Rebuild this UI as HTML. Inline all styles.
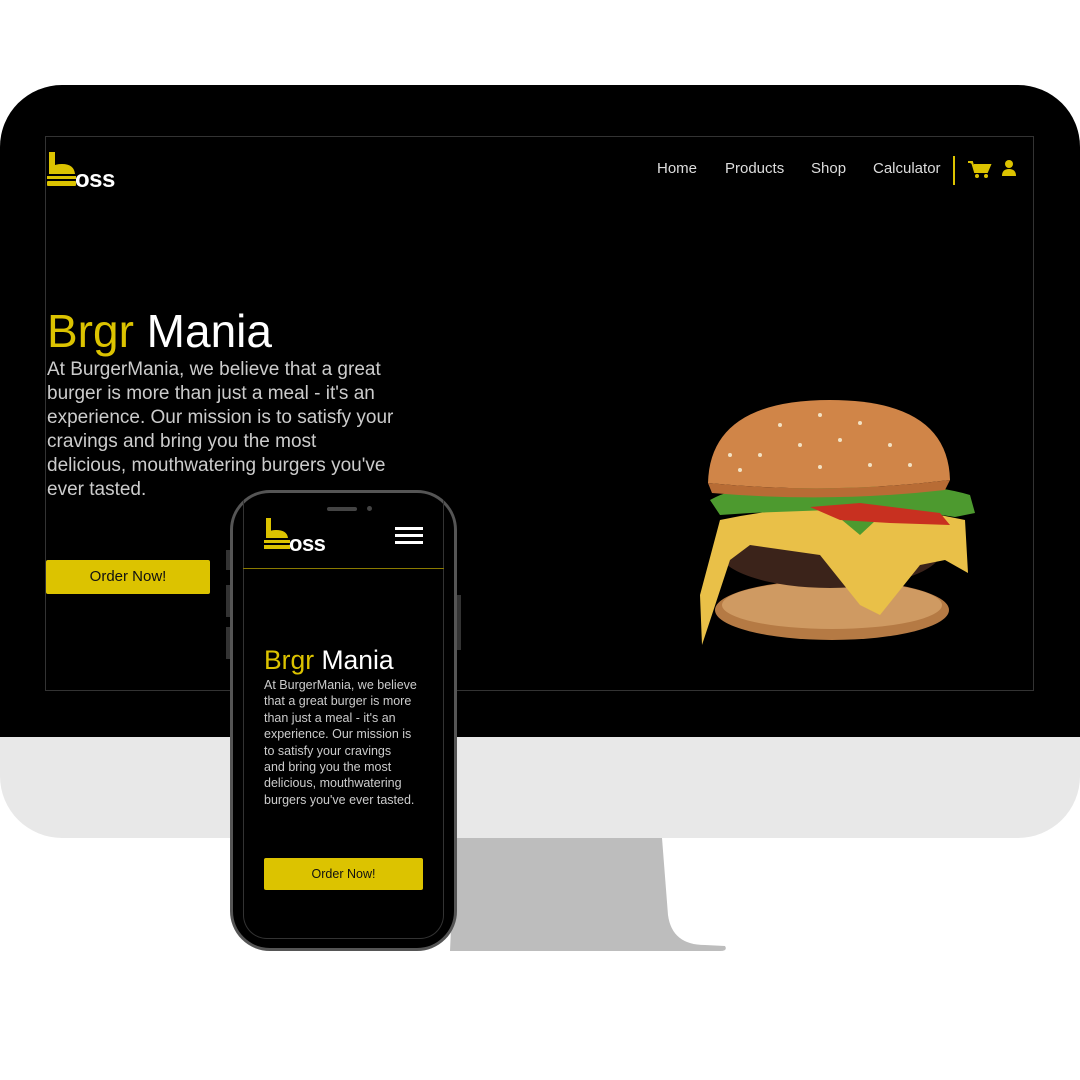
<!DOCTYPE html>
<html><head><meta charset="utf-8"><style>
*{margin:0;padding:0;box-sizing:border-box}
body{width:1080px;height:1080px;background:#fff;position:relative;overflow:hidden;font-family:"Liberation Sans",sans-serif}
.abs{position:absolute}
.y{color:#dcc300}
</style></head><body>
<svg class="abs" style="left:0;top:0" width="1080" height="1080">
<path d="M455 838 L662 838 L668 915 Q672 945 705 945 L725 946 Q728 951 720 951 L450 951 Z" fill="#bdbdbd"/>
</svg>
<div class="abs" style="left:0;top:85px;width:1080px;height:753px;border-radius:62px;background:#e8e8e8;overflow:hidden">
<div style="height:652px;background:#000"></div>
</div>
<div class="abs" style="left:45px;top:136px;width:989px;height:555px;border:1px solid #333"></div>
<svg class="abs" style="left:46px;top:150px" width="90" height="40">
<rect x="3" y="2" width="6" height="22" fill="#dcc300"/>
<path d="M3 24 Q3 14 16 14 Q28 14 29 24 Z" fill="#dcc300"/>
<rect x="1" y="26" width="29" height="3" fill="#dcc300"/>
<rect x="1" y="31" width="29" height="5" rx="1" fill="#dcc300"/>
<text x="29" y="37" font-family="Liberation Sans" font-weight="bold" font-size="24" fill="#fff" letter-spacing="-0.5">oss</text>
</svg>
<div class="abs" style="left:657px;top:160px;color:#ddd;font-size:15px">
<span class="abs" style="left:0">Home</span><span class="abs" style="left:68px">Products</span><span class="abs" style="left:154px">Shop</span><span class="abs" style="left:216px;white-space:nowrap">Calculator</span></div>
<div class="abs" style="left:953px;top:156px;width:2px;height:29px;background:#dcc300"></div>
<svg class="abs" style="left:966px;top:158px" width="60" height="24">
<path d="M2 4 L6 4 L9 14 L21 14 L24 7 L8 7" fill="#dcc300" stroke="#dcc300" stroke-width="2"/>
<circle cx="11" cy="18" r="2" fill="#dcc300"/><circle cx="20" cy="18" r="2" fill="#dcc300"/>
<circle cx="43" cy="6" r="4" fill="#dcc300"/><path d="M36 18 Q36 11 43 11 Q50 11 50 18 Z" fill="#dcc300"/>
</svg>
<div class="abs" style="left:47px;top:305px;font-size:46px;color:#fff;line-height:52px;white-space:nowrap"><span class="y">Brgr</span> Mania</div>
<div class="abs" style="left:47px;top:358px;font-size:19px;letter-spacing:0;line-height:24px;color:#ccc;white-space:nowrap">At BurgerMania, we believe that a great<br>burger is more than just a meal - it's an<br>experience. Our mission is to satisfy your<br>cravings and bring you the most<br>delicious, mouthwatering burgers you've<br>ever tasted.</div>
<div class="abs" style="left:46px;top:560px;width:164px;height:34px;background:#dcc300;border-radius:2px;font-size:15px;text-align:center;line-height:34px;color:#111">Order Now!</div>
<svg class="abs" style="left:690px;top:395px" width="290" height="250">
<ellipse cx="142" cy="215" rx="117" ry="30" fill="#b57a44"/>
<ellipse cx="142" cy="210" rx="110" ry="24" fill="#cf9a62"/>
<ellipse cx="140" cy="155" rx="112" ry="38" fill="#3b231a"/>
<path d="M30 125 Q150 100 250 120 L275 125 L278 178 L255 165 L230 170 L190 220 L170 210 L130 160 L60 150 L40 165 L12 250 L10 200 Z" fill="#e9c048"/>
<path d="M20 105 Q50 88 90 95 Q140 85 190 92 Q240 88 280 100 L285 118 L265 122 L200 112 L170 140 L140 115 L60 118 L30 120 Z" fill="#4d9a2f"/>
<path d="M120 112 L170 108 L250 118 L260 130 L200 128 L150 125 Z" fill="#c83020"/>
<path d="M18 88 Q20 5 140 5 Q258 5 260 85 Q140 100 18 88 Z" fill="#d08548"/>
<path d="M18 88 Q140 100 260 85 L255 95 Q140 108 22 98 Z" fill="#b86c35"/>
<g fill="#f2e2c4"><circle cx="90" cy="30" r="2"/><circle cx="130" cy="20" r="2"/><circle cx="170" cy="28" r="2"/><circle cx="110" cy="50" r="2"/><circle cx="150" cy="45" r="2"/><circle cx="200" cy="50" r="2"/><circle cx="70" cy="60" r="2"/><circle cx="220" cy="70" r="2"/><circle cx="50" cy="75" r="2"/><circle cx="130" cy="72" r="2"/><circle cx="180" cy="70" r="2"/><circle cx="40" cy="60" r="2"/></g>
</svg>
<div class="abs" style="left:230px;top:490px;width:227px;height:461px;border-radius:40px;background:#000;border:3px solid #555"></div>
<div class="abs" style="left:226px;top:550px;width:4px;height:20px;background:#333"></div>
<div class="abs" style="left:226px;top:585px;width:4px;height:32px;background:#333"></div>
<div class="abs" style="left:226px;top:627px;width:4px;height:32px;background:#333"></div>
<div class="abs" style="left:457px;top:595px;width:4px;height:55px;background:#333"></div>
<div class="abs" style="left:243px;top:500px;width:201px;height:439px;border-radius:0 0 24px 24px;border:1px solid #333;border-top:none"></div>
<div class="abs" style="left:327px;top:507px;width:30px;height:4px;border-radius:2px;background:#444"></div>
<div class="abs" style="left:367px;top:506px;width:5px;height:5px;border-radius:50%;background:#444"></div>
<svg class="abs" style="left:263px;top:517px" width="80" height="36">
<rect x="3" y="1" width="5" height="20" fill="#dcc300"/>
<path d="M3 21 Q3 13 13 13 Q24 13 25 21 Z" fill="#dcc300"/>
<rect x="1" y="23" width="26" height="3" fill="#dcc300"/>
<rect x="1" y="28" width="26" height="4" fill="#dcc300"/>
<text x="26" y="34" font-family="Liberation Sans" font-weight="bold" font-size="22" fill="#fff" letter-spacing="-0.5">oss</text>
</svg>
<div class="abs" style="left:395px;top:527px;width:28px;height:3px;background:#fff;box-shadow:0 7px 0 #fff,0 14px 0 #fff"></div>
<div class="abs" style="left:243px;top:568px;width:201px;height:1px;background:#8a7a00"></div>
<div class="abs" style="left:264px;top:644px;font-size:26.5px;color:#fff;line-height:32px;white-space:nowrap"><span class="y">Brgr</span> Mania</div>
<div class="abs" style="left:264px;top:677px;font-size:12.5px;letter-spacing:0;line-height:16.4px;color:#ccc;white-space:nowrap">At BurgerMania, we believe<br>that a great burger is more<br>than just a meal - it's an<br>experience. Our mission is<br>to satisfy your cravings<br>and bring you the most<br>delicious, mouthwatering<br>burgers you've ever tasted.</div>
<div class="abs" style="left:264px;top:858px;width:159px;height:32px;background:#dcc300;border-radius:2px;font-size:12.5px;text-align:center;line-height:32px;color:#111">Order Now!</div>
</body></html>
